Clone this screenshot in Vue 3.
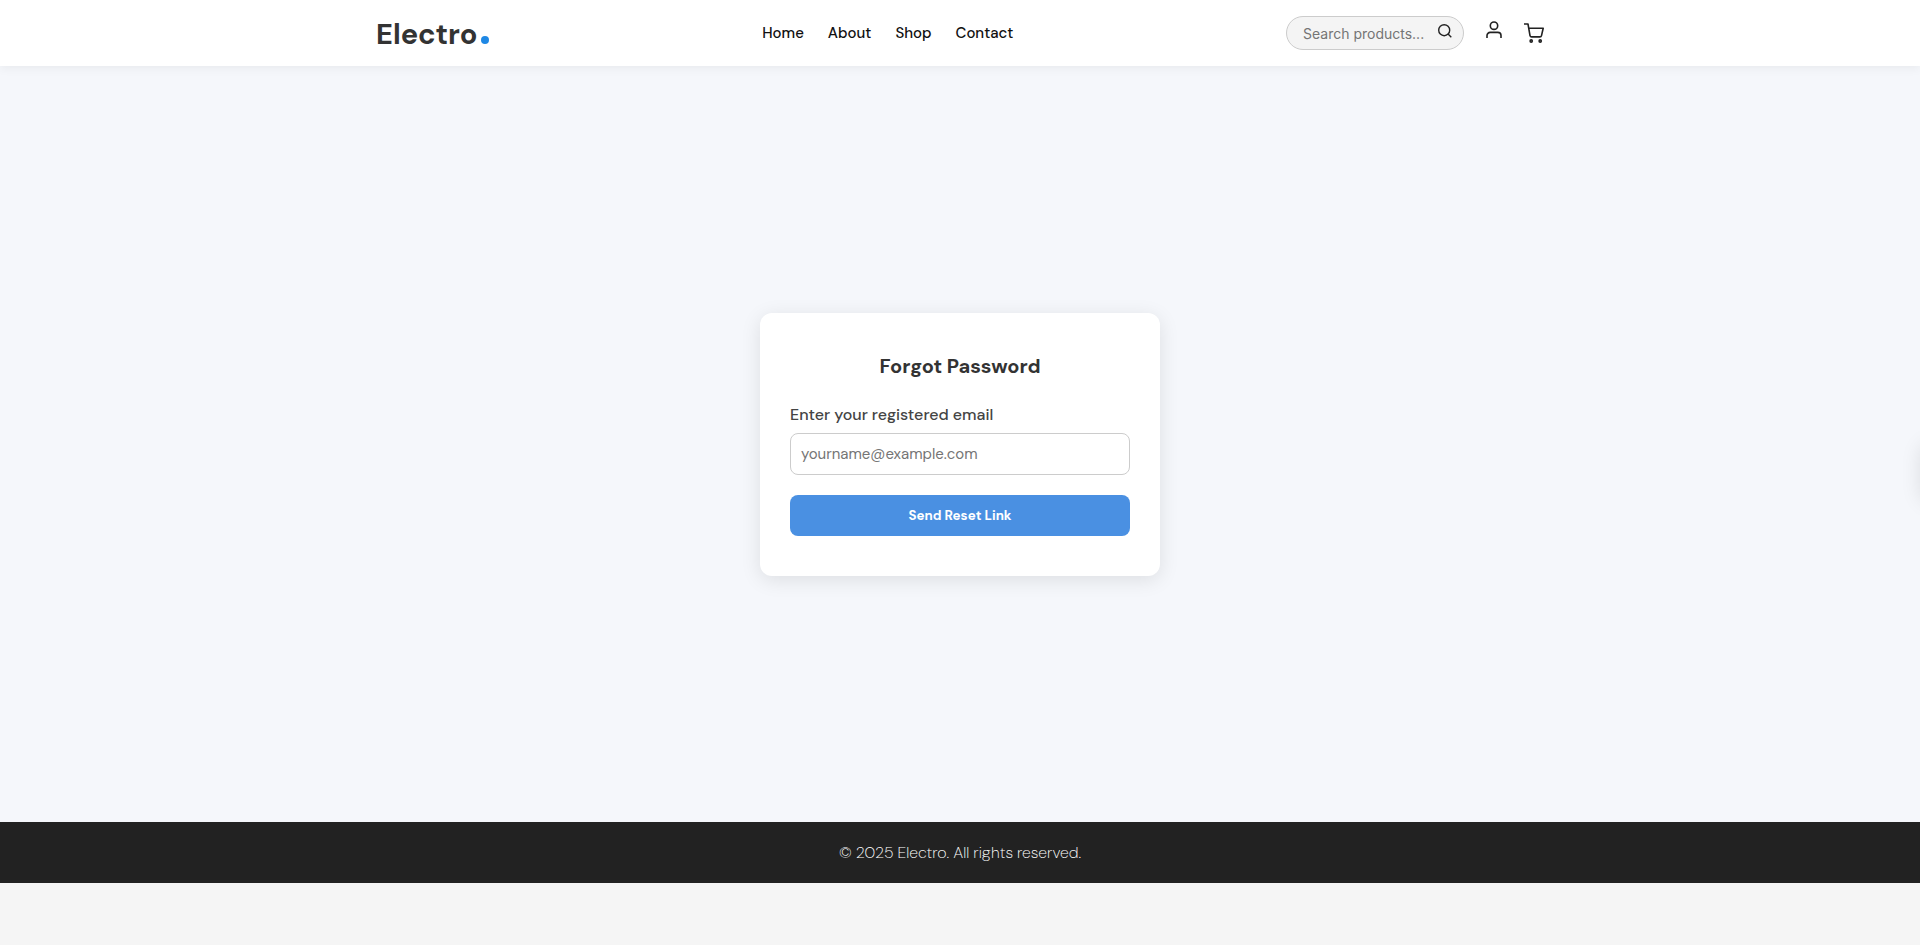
<script setup>
import { ref } from 'vue'

const links = ['Home', 'About', 'Shop', 'Contact']
const query = ref('')
const email = ref('')
</script>

<template>
  <div class="page">
    <header class="header">
      <div class="bar">
        <a class="logo" href="#">Electro<span class="dot"></span></a>
        <nav class="nav" aria-label="Main">
          <a v-for="link in links" :key="link" href="#">{{ link }}</a>
        </nav>
        <div class="tools">
          <form class="search" role="search" @submit.prevent>
            <input v-model="query" type="search" placeholder="Search products..." aria-label="Search products" />
            <button type="submit" aria-label="Search">
              <svg width="14" height="14" viewBox="0 0 14 14" fill="none" stroke="currentColor" stroke-width="1.4" stroke-linecap="square">
                <circle cx="6.2" cy="6.2" r="5.5" />
                <path d="M10.3 10.3 12.8 12.8" />
              </svg>
            </button>
          </form>
          <a class="icon user" href="#" aria-label="Account">
            <svg width="16" height="18" viewBox="0 0 16 18" fill="none" stroke="currentColor" stroke-width="1.6">
              <circle cx="8" cy="4.7" r="3.7" />
              <path d="M1 17V14.600a3.2 3.2 0 0 1 3.2-3.2h7.600A3.2 3.2 0 0 1 15 14.600V17" />
            </svg>
          </a>
          <a class="icon" href="#" aria-label="Cart">
            <svg width="20" height="20" viewBox="0 0 20 20" fill="none" stroke="currentColor" stroke-width="1.6" stroke-linejoin="round">
              <path d="M0 1H4l2 11.600q.3 1.300 1.600 1.300h8.300q1.300 0 1.600-1.300L19.200 5.200H4.800" />
              <circle cx="7.2" cy="18" r="1.1" />
              <circle cx="16.2" cy="18" r="1.1" />
            </svg>
          </a>
        </div>
      </div>
    </header>

    <main class="main">
      <form class="card" @submit.prevent>
        <h1>Forgot Password</h1>
        <label for="email">Enter your registered email</label>
        <input id="email" v-model="email" type="email" placeholder="yourname@example.com" />
        <button type="submit">Send Reset Link</button>
      </form>
    </main>

    <footer class="footer">
      <p>© 2025 Electro. All rights reserved.</p>
    </footer>

    <aside class="drawer" aria-hidden="true"></aside>
  </div>
</template>

<style>
body {
  margin: 0;
  background: #f5f5f5;
}
</style>

<style scoped>
.page,
.page * {
  box-sizing: border-box;
}

.page {
  font-family: "DM Sans", Inter, "Liberation Sans", sans-serif;
  color: #222;
}

a {
  color: inherit;
  text-decoration: none;
}

.header {
  position: relative;
  background: #fff;
  box-shadow: 0 2px 10px rgba(0, 0, 0, 0.06);
}

.bar {
  display: flex;
  align-items: center;
  justify-content: space-between;
  max-width: 1200px;
  height: 66px;
  margin: 0 auto;
  padding: 0 16px;
}

.logo {
  display: flex;
  align-items: baseline;
  gap: 4px;
  padding-top: 2px;
  color: #333;
  font-size: 29px;
  font-weight: 700;
  line-height: 40px;
}

.dot {
  width: 8px;
  height: 8px;
  border-radius: 50%;
  background: #1e88e5;
}

.nav {
  display: flex;
  gap: 24px;
  color: #111;
  font-size: 15px;
  font-weight: 500;
  line-height: 24px;
}

.tools {
  display: flex;
  align-items: center;
  gap: 22px;
}

.search {
  display: flex;
  align-items: center;
  width: 178px;
  height: 34px;
  padding: 0 11px 0 16px;
  border: 1px solid #ccc;
  border-radius: 17px;
  background: #f4f4f4;
}

.search input {
  flex: 1;
  min-width: 0;
  padding: 2px 0 0;
  border: 0;
  outline: 0;
  background: none;
  font: 14px/20px Inter, sans-serif;
}

.search button {
  display: flex;
  padding: 0 0 4px;
  border: 0;
  background: none;
  color: #222;
}

input::placeholder {
  color: #757575;
}

.icon {
  display: flex;
}

.user {
  padding-bottom: 6px;
}

.main {
  display: flex;
  align-items: center;
  justify-content: center;
  min-height: 80vh;
  background: #f5f7fb;
}

.card {
  display: flex;
  flex-direction: column;
  width: 100%;
  max-width: 400px;
  padding: 40px 30px;
  border-radius: 12px;
  background: #fff;
  box-shadow: 0 4px 20px rgba(0, 0, 0, 0.1);
}

.card h1 {
  margin: 0 0 24px;
  color: #333;
  font-size: 20px;
  font-weight: 700;
  line-height: 26px;
  text-align: center;
}

.card label {
  margin-bottom: 6px;
  color: #444;
  font-size: 16px;
  font-weight: 500;
  line-height: 24px;
}

.card input {
  height: 42px;
  margin-bottom: 20px;
  padding: 0 10px;
  border: 1px solid #ccc;
  border-radius: 8px;
  background: #fff;
  font-family: inherit;
  font-size: 15px;
}

.card button {
  height: 41px;
  border: 0;
  border-radius: 8px;
  background: #4a90e2;
  color: #fff;
  font-family: inherit;
  font-weight: 700;
}

.footer {
  padding: 20px;
  background: #222;
  color: #fff;
  font-size: 16px;
  font-weight: 200;
  line-height: 21px;
  text-align: center;
}

.footer p {
  margin: 0;
}

.drawer {
  position: fixed;
  top: 50%;
  left: 100%;
  width: 300px;
  height: 60px;
  border-radius: 12px;
  box-shadow: 0 0 20px rgba(0, 0, 0, 0.1);
  transform: translateY(-50%);
}
</style>
